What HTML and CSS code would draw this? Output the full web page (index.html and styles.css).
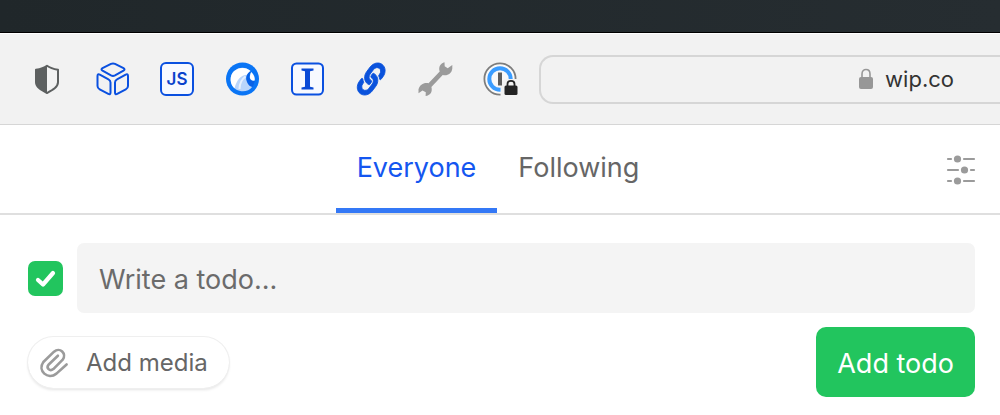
FILE: index.html
```html
<!DOCTYPE html>
<html lang="en">
<head>
<meta charset="utf-8">
<title>WIP</title>
<link rel="stylesheet" href="styles.css">
</head>
<body>
<div class="desktop"></div>
<header class="toolbar">
  <div class="extensions">
    <button class="ext" type="button" aria-label="Privacy report">
      <svg viewBox="0 0 34 34"><path d="M17 3.700c3 2.200 6.800 3.300 11 4v12.600c0 5-5.500 7.800-11 10.700-5.500-2.900-11-5.700-11-10.700V7.700c4.200-.7 8-1.800 11-4z" fill="#f2f2f2" stroke="#5d6060" stroke-width="2" stroke-linejoin="round"/><path d="M17 3.700v27.300C11.500 28.100 6 25.300 6 20.300V7.700c4.200-.7 8-1.800 11-4z" fill="#5d6060"/></svg>
    </button>
    <button class="ext" type="button" aria-label="Cubes">
      <svg viewBox="0 0 34 34" fill="none" stroke="#0a50e0" stroke-width="2" stroke-linejoin="round"><path d="M16 1.900q2-1 4 0l8.500 4.300q2 1.200 0 2.400L20 13.400q-2 1-4 0L7.500 8.600q-2-1.200 0-2.400z"/><path d="M2.500 14q0-2.500 2.300-1.400l8.700 4.700q2 1 2 3.200v10q0 2.500-2.200 1.400l-8.600-4.500q-2.200-1.200-2.200-3.400z"/><path d="M33 14q0-2.500-2.300-1.400L22 17.300q-2 1-2 3.200v10q0 2.500 2.200 1.400l8.600-4.500q2.200-1.200 2.200-3.400z"/></svg>
    </button>
    <button class="ext ext-script" type="button">JS</button>
    <button class="ext" type="button" aria-label="Wave">
      <svg viewBox="0 0 34 34"><circle cx="17.500" cy="17" r="16.500" fill="#0a75f5"/><path d="M11 27.500C4.500 23 4 13.500 9 9 14 4.500 21 4.500 25.500 9c-3.500 2.500-4.500 6-3.500 9.500 1.300 4 3 5.500 5.500 6-4 5.500-11 6-16.500 3z" fill="#b9d5fb"/><path d="M9.500 26.500C4.500 22 4.500 13.500 9 9.300 14 4.800 21 4.800 25.500 9.100c-1.500 1-2.500 2.200-3 3.600-6.500-.2-11 5.300-13 13.800z" fill="#fff"/><path d="M14.500 27c0-5 2-9.500 6-12.500" fill="none" stroke="#e6f0fe" stroke-width="2"/><path d="M25.500 9.100c-4 3-5 6.500-3.700 10.400 1.200 3.300 3.200 5.500 6 5.500l2-6c-2.800.4-5-1-5.300-3.500-.2-2.500.5-4.500 1-6.400z" fill="#0a62e6"/><path d="M26.300 10c2.700 2.500 3.700 5 3.500 8.500-2.800.6-4.600-.6-4.900-2.700-.2-2 .4-4.200 1.400-5.800z" fill="#fff"/></svg>
    </button>
    <button class="ext" type="button" aria-label="Save to reader">
      <svg viewBox="0 0 34 34"><rect x="2" y="1.500" width="31" height="31" rx="4.500" fill="#f7f9ff" stroke="#0a50e0" stroke-width="2"/><path d="M11.500 6.500h12v2l-3.500.8v15.400l3.500.8v2h-12v-2l3.500-.8V9.300l-3.500-.8z" fill="#0a4ad6"/></svg>
    </button>
    <button class="ext" type="button" aria-label="Copy link">
      <svg viewBox="0 0 34 34"><path transform="translate(16.200 17) rotate(-53) scale(.061 .053) rotate(45) translate(-256 -256)" fill="#0a52dc" stroke="#0a52dc" stroke-width="14" d="M326.612 185.391c59.747 59.809 58.927 155.698.36 214.590-.11.12-.24.25-.36.37l-67.200 67.200c-59.270 59.270-155.699 59.262-214.960 0-59.270-59.260-59.270-155.700 0-214.960l37.106-37.106c9.840-9.840 26.786-3.300 27.294 10.606.648 17.722 3.826 35.527 9.690 52.721 1.986 5.822.567 12.262-3.783 16.612l-13.087 13.087c-28.026 28.026-28.905 73.660-1.155 101.960 28.024 28.579 74.086 28.749 102.325.510l67.200-67.190c28.191-28.191 28.073-73.757 0-101.830-3.701-3.694-7.429-6.564-10.341-8.569a16.037 16.037 0 0 1-6.947-12.606c-.396-10.567 3.348-21.456 11.698-29.806l21.054-21.055c5.521-5.521 14.182-6.199 20.584-1.731a152.482 152.482 0 0 1 20.522 17.197zM467.547 44.449c-59.261-59.262-155.690-59.270-214.960 0l-67.200 67.200c-.12.12-.25.25-.36.37-58.566 58.892-59.387 154.781.36 214.590a152.454 152.454 0 0 0 20.521 17.196c6.402 4.468 15.064 3.789 20.584-1.731l21.054-21.055c8.350-8.350 12.094-19.239 11.698-29.806a16.037 16.037 0 0 0-6.947-12.606c-2.912-2.005-6.640-4.875-10.341-8.569-28.073-28.073-28.191-73.639 0-101.830l67.200-67.190c28.239-28.239 74.300-28.069 102.325.510 27.750 28.300 26.872 73.934-1.155 101.960l-13.087 13.087c-4.350 4.350-5.769 10.790-3.783 16.612 5.864 17.194 9.042 34.999 9.690 52.721.509 13.906 17.454 20.446 27.294 10.606l37.106-37.106c59.271-59.259 59.271-155.699.001-214.959z"/></svg>
    </button>
    <button class="ext" type="button" aria-label="Tools">
      <svg viewBox="0 0 34 34"><path d="M24.500.3c-4 1.200-6.300 4.600-4.800 9.200L8.500 21.200C4 20.200-.3 22.500-1.500 27.300v4l4-2.800 3.300 1.700-.2 3.800c4.500-.5 7.200-4 5.800-9L22.700 13c4.800 1 9-1.200 9.600-6.500V3l-4.600 3.200-3-2z" fill="#9b9b9b"/></svg>
    </button>
    <button class="ext" type="button" aria-label="Password manager, locked">
      <svg viewBox="0 0 34 34"><circle cx="15" cy="17" r="15.600" fill="#fafafa" stroke="#7d7d7d" stroke-width="1.800"/><circle cx="15" cy="17" r="10.700" fill="#f8f8f8" stroke="#3a9cff" stroke-width="4"/><path d="M15.500 34V23q0-6 8-6H34v17z" fill="#f2f2f2"/><path d="M13 10.500h4v13h-4z" fill="#5c5c5c"/><rect x="19.500" y="23.500" width="13" height="9.500" rx="1.500" fill="#242424"/><path d="M22.500 24.500V22c0-4.200 7-4.200 7 0v2.500" fill="none" stroke="#242424" stroke-width="1.800"/></svg>
    </button>
  </div>
  <button class="address" type="button">
    <svg class="lock" viewBox="0 0 14 22"><rect y="9" width="14" height="12" rx="2" fill="#979797"/><path d="M3 10V6c0-6 8-6 8 0v4" fill="none" stroke="#979797" stroke-width="1.600"/></svg>
    <span>wip.co</span>
  </button>
</header>
<nav class="nav">
  <div class="tabs">
    <a class="tab tab-active" href="#everyone" aria-current="page">Everyone</a>
    <a class="tab" href="#following">Following</a>
  </div>
  <button class="filters" type="button" aria-label="Feed settings">
    <svg viewBox="0 0 30 30" fill="#9b9b9b" stroke="#9b9b9b" stroke-width="2.200" stroke-linecap="round"><path d="M2 5h3M18 5h10M2 16h10M25 16h3M2 27h3M18 27h10"/><g stroke="none"><circle cx="11.500" cy="5" r="3.600"/><circle cx="18.500" cy="16" r="3.600"/><circle cx="11.500" cy="27" r="3.600"/></g></svg>
  </button>
</nav>
<main>
  <form class="composer">
    <div class="row">
      <label class="done">
        <input class="done-box" type="checkbox" checked aria-label="Done">
        <svg class="done-mark" viewBox="0 0 35 35" fill="none" stroke="#fff" stroke-width="4.200" stroke-linecap="round" stroke-linejoin="round"><path d="M10 19l5 4.500 10-11.500"/></svg>
      </label>
      <input class="todo" type="text" placeholder="Write a todo..." aria-label="Todo">
    </div>
    <div class="row row-actions">
      <button class="media" type="button">
        <svg class="clip" viewBox="0 0 30 30" fill="none" stroke="#9b9b9b" stroke-width="2.700" stroke-linecap="round" stroke-linejoin="round"><path d="M27.500 17L17 26.500C8 33.500-3 23.500 3.500 14.500L14.500 3.800c6-5.300 13.500 2.200 9 8.200L13.800 21.800c-3.800 3-7.600-1.300-5-4.500L18.500 8"/></svg>
        <span>Add media</span>
      </button>
      <button class="submit" type="submit">Add todo</button>
    </div>
  </form>
</main>
</body>
</html>
```
FILE: styles.css
```css
* {
  box-sizing: border-box;
}

body {
  margin: 0;
  background: #fff;
  color: #666;
  font-family: Inter, "Liberation Sans", sans-serif;
  overflow-x: hidden;
}

button,
input {
  margin: 0;
  padding: 0;
  border: 0;
  background: none;
  color: inherit;
  font: inherit;
}

svg {
  display: block;
  overflow: visible;
}

.desktop {
  height: 33px;
  background: linear-gradient(90deg, #20272a, #262d31);
  border-bottom: 1px solid #000;
}

.toolbar {
  display: flex;
  align-items: center;
  gap: 20px;
  height: 92px;
  padding-left: 30px;
  background: #f2f2f2;
  border-top: 1px solid #fff;
  border-bottom: 1px solid #d6d6d6;
}

.extensions {
  display: flex;
  gap: 31px;
}

.ext {
  flex: none;
  width: 34px;
  height: 34px;
}

.ext-script {
  border: 2px solid #0a50e0;
  border-radius: 6px;
  background: #f7f9ff;
  color: #0a42cc;
  font-size: 17px;
  font-weight: 600;
}

.address {
  display: flex;
  flex: 1;
  align-items: center;
  justify-content: flex-end;
  gap: 12px;
  height: 49px;
  padding-right: 46px;
  border: 2px solid #d6d6d6;
  border-right: 0;
  border-radius: 14px 0 0 14px;
  color: #333;
  font-size: 22px;
}

.lock {
  width: 14px;
  height: 22px;
}

.nav {
  display: grid;
  grid-template-columns: 1fr auto 1fr;
  align-items: center;
  height: 90px;
  padding: 0 24px 0 20px;
  border-bottom: 2px solid #dfdfdf;
}

.tabs {
  display: flex;
  grid-column: 2;
  height: 100%;
}

.tab {
  padding: 25px 21px 0;
  border-bottom: 5px solid transparent;
  color: #666;
  font-size: 27px;
  line-height: 36px;
  text-decoration: none;
}

.tab-active {
  border-bottom-color: #3478f6;
  color: #1456f0;
}

.filters {
  justify-self: end;
  width: 30px;
  height: 30px;
}

.composer {
  display: flex;
  flex-direction: column;
  gap: 14px;
  padding: 28px 25px 16px 28px;
}

.row {
  display: flex;
  align-items: center;
  gap: 14px;
}

.row-actions {
  justify-content: space-between;
}

.done {
  position: relative;
  flex: none;
  width: 35px;
  height: 35px;
}

.done-box {
  display: block;
  width: 100%;
  height: 100%;
  appearance: none;
  border-radius: 7px;
  background: #22c55e;
}

.done-mark {
  position: absolute;
  inset: 0;
}

.todo {
  flex: 1;
  min-width: 0;
  height: 70px;
  padding: 2px 22px 0;
  border-radius: 7px;
  background: #f4f4f4;
  font-size: 27px;
}

.todo::placeholder {
  color: #6b6b6b;
}

.media {
  display: flex;
  align-items: center;
  gap: 17px;
  height: 51px;
  padding: 0 21px 0 12px;
  border-radius: 26px;
  box-shadow: 0 0 0 1px #efefef, 0 2px 3px #e4e4e4;
  font-size: 24px;
}

.clip {
  width: 29px;
  height: 29px;
}

.submit {
  height: 70px;
  padding: 2px 21px 0;
  border-radius: 10px;
  background: #22c55e;
  color: #fff;
  font-size: 27px;
}
```
